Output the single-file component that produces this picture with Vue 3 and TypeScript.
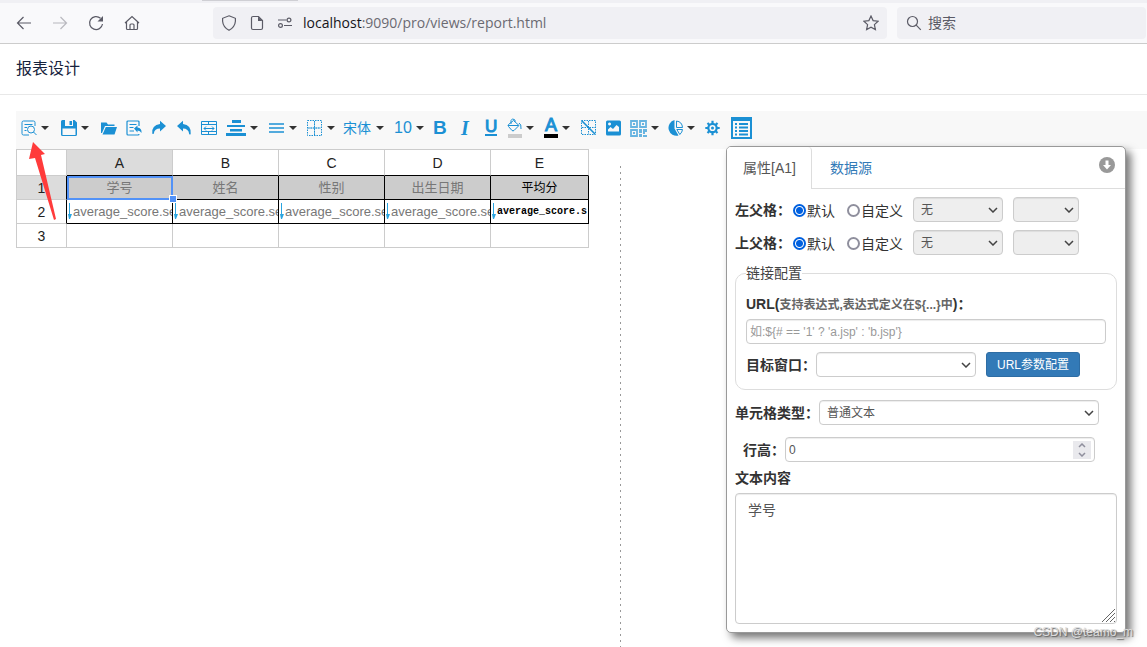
<script setup lang="ts">
import { ref } from 'vue'

interface ParentCell {
  id: string
  label: string
  mode: string
}

const columns = ['A', 'B', 'C', 'D', 'E']
const titles = ['学号', '姓名', '性别', '出生日期', '平均分']
const bindings = ['average_score.se', 'average_score.se', 'average_score.se', 'average_score.se', 'average_score.s']

const parents = ref<ParentCell[]>([
  { id: 'left', label: '左父格：', mode: 'default' },
  { id: 'top', label: '上父格：', mode: 'default' },
])
const link = ref('')
const rowHeight = ref(0)
const content = ref('学号')
</script>

<template>
  <div class="page">
    <div class="tab-strip"><span class="active-tab"></span></div>
    <nav class="browser-bar">
      <div class="nav-buttons">
        <button aria-label="后退">
          <svg class="i16" viewBox="0 0 16 16"><path d="M15 8H1.5M7.5 2L1.5 8l6 6" /></svg>
        </button>
        <button aria-label="前进" class="faded">
          <svg class="i16" viewBox="0 0 16 16"><path d="M1 8h13.500M8.500 2l6 6-6 6" /></svg>
        </button>
        <button aria-label="刷新">
          <svg class="i16" viewBox="0 0 16 16"><path d="M14.500 9A6.500 6.500 0 1 1 12.500 3.300" /><path class="solid" d="M15 1v5.500H9.500z" /></svg>
        </button>
        <button aria-label="主页">
          <svg class="i16" viewBox="0 0 16 16"><path d="M1 8l7-6.500L15 8M2.500 7v6.500q0 1 1 1h9q1 0 1-1V7M6 14.500V10q0-1 1-1h2q1 0 1 1v4.500" /></svg>
        </button>
      </div>
      <div class="address">
        <svg class="i16" viewBox="0 0 16 16"><path d="M8 .8l6.400 2.500v3q-.5 6-6.400 9-5.900-3-6.400-9v-3z" /></svg>
        <svg class="i16 doc" viewBox="0 0 16 16"><path d="M4 1.500h5.500l4 4V13q0 1.500-1.500 1.500H4q-1.500 0-1.500-1.500V3Q2.500 1.500 4 1.500z" /><path class="solid" d="M9 1.500v4.500h4.500z" /></svg>
        <svg class="i16 site" viewBox="0 0 16 16"><path d="M1 5h8.500M7 10.500h8" /><circle cx="12" cy="5" r="1.900" /><circle cx="3.500" cy="10.500" r="1.900" /></svg>
        <span class="url">localhost<span>:9090/pro/views/report.html</span></span>
        <svg class="i16" viewBox="0 0 16 16"><path d="M8 1l2.100 4.600 5 .6-3.700 3.400 1 5L8 12.200l-4.400 2.400 1-5L.9 6.200l5-.6z" /></svg>
      </div>
      <div class="search">
        <svg class="i16" viewBox="0 0 16 16"><circle cx="6.500" cy="6.500" r="5" /><path d="M10.200 10.200l4.600 4.600" /></svg>
        <input type="text" aria-label="搜索" placeholder="搜索" />
      </div>
    </nav>

    <header class="page-head">报表设计</header>

    <main class="workspace">
      <div class="toolbar" role="toolbar">
        <button aria-label="预览">
          <svg class="i16" viewBox="0 0 16 16"><path class="thin" d="M14 6V2.500Q14 1 12.500 1h-10Q1 1 1 2.500v11Q1 15 2.500 15H8M3.500 4.500h8M3.500 7.500H6M3.500 10.500h2" /><circle class="thin" cx="10" cy="9.500" r="3.500" /><path class="thin" d="M12.500 12l3 3" /></svg>
          <i class="caret"></i>
        </button>
        <button aria-label="保存">
          <svg class="i16" viewBox="0 0 16 16"><path class="solid" fill-rule="evenodd" d="M1.500 0h12L16 2.500v12q0 1.500-1.500 1.500h-13Q0 16 0 14.500v-13Q0 0 1.500 0zM4 0v6h8V0zM1.500 8.500V15h13V8.500z" /><path class="solid" d="M8.500 1h2.500v4H8.500z" /></svg>
          <i class="caret"></i>
        </button>
        <button aria-label="打开">
          <svg class="i16" viewBox="0 0 16 16"><path class="solid" d="M0 13V2.500h5.500l1.500 2h6.500V6H4L1 13zM4.800 7H16l-2.500 7.500H1.500z" /></svg>
        </button>
        <button aria-label="导入">
          <svg class="i16" viewBox="0 0 16 16"><path class="import" d="M13 6V2q0-1-1-1H2Q1 1 1 2v12q0 1 1 1h10q1 0 1-1M3.500 4.500h7M3.500 7.500h4M3.500 11H8" /><path class="solid" d="M8 8.500l3.500-3v2Q16 8 15.500 13q-1.200-2.500-4-2.500v2z" /></svg>
        </button>
        <button aria-label="重做">
          <svg class="i16" viewBox="0 0 16 16"><path class="solid" d="M15 6L9 .8V4Q.5 5 1.300 13.500q.8 1.200 1.500 0Q3.500 8.500 9 8.500v3z" /></svg>
        </button>
        <button aria-label="撤销">
          <svg class="i16" viewBox="0 0 16 16"><path class="solid" d="M1 6L7 .8V4q8.500 1 7.700 10-.8 1.200-1.500 0Q12.500 8.500 7 8.500v3z" /></svg>
        </button>
        <button aria-label="合并单元格">
          <svg class="i16" viewBox="0 0 16 16"><path class="thin" d="M.5 1.500h15v13H.5zM.5 4.500h15M.5 11.500h15M7.500 1.500v3M7.500 11.500v3M3 8.500h10M5 6.500l-2 2 2 2M11 6.500l2 2-2 2" /></svg>
        </button>
        <button aria-label="水平对齐">
          <svg class="i20" viewBox="0 0 20 16"><path class="solid" d="M6 0h9v3H6zM1 5h18v2H1zM4 9h12v2.500H4zM0 13h20v3H0z" /></svg>
          <i class="caret"></i>
        </button>
        <button aria-label="垂直对齐">
          <svg class="i16" viewBox="0 0 16 16"><path class="mid" d="M0 4h15M0 8h15M0 12h15" /></svg>
          <i class="caret"></i>
        </button>
        <button aria-label="边框">
          <svg class="i16" viewBox="0 0 16 16"><path class="dots" d="M.5.5h14v15H.5zM7.500 1v14M1 8h13" /><path class="cross" d="M7.500 2v12M2 8h11" /></svg>
          <i class="caret low"></i>
        </button>
        <button class="word">宋体<i class="caret"></i></button>
        <button class="word size">10<i class="caret"></i></button>
        <button class="bold" aria-label="粗体">B</button>
        <button class="italic" aria-label="斜体">I</button>
        <button class="underline" aria-label="下划线"><span>U</span></button>
        <button aria-label="背景色">
          <span class="swatch">
            <svg class="i16" viewBox="0 0 16 16"><path class="thin" d="M6.500 2.500L12 7.500 7 12.500q-1 .8-2 0l-3.500-4q-.8-1 0-2zM1 7.500h10.500M4 6V2.500Q5-.5 8 2v2M12 5q2.500 1 2 6" /></svg>
            <i class="ink gray"></i>
          </span>
          <i class="caret"></i>
        </button>
        <button aria-label="字体颜色">
          <span class="swatch"><b>A</b><i class="ink"></i></span>
          <i class="caret"></i>
        </button>
        <button aria-label="清除边框">
          <svg class="i16" viewBox="0 0 16 16"><path class="dots" d="M.5.5h14v14H.5zM7.500 1v13M1 7.500h13" /><path class="mid" d="M1 1l13 13" /></svg>
        </button>
        <button aria-label="图片">
          <svg class="i16" viewBox="0 0 16 16"><path class="solid" fill-rule="evenodd" d="M1.500.5h12Q15 .5 15 2v12q0 1.500-1.500 1.500h-12Q0 15.500 0 14V2Q0 .5 1.500.5zM2 11.500h11V7L10.500 5 7 9 4.500 7 2 9.500zM3.500 2.500a1.500 1.500 0 1 0 .1 0z" /></svg>
        </button>
        <button aria-label="二维码">
          <svg class="i17 qr" viewBox="0 0 17 17"><path d="M1 1h6v6H1zM10 1h6v6h-6zM1 10h6v6H1z" /><path class="solid" d="M3 3h2v2H3zM12 3h2v2h-2zM3 12h2v2H3zM9 9h3v4H9zM13 9h4v3h-2v2h-2zM9 14h3v3H9zM13 15h4v2h-4z" /></svg>
          <i class="caret"></i>
        </button>
        <button aria-label="图表">
          <svg class="i16" viewBox="0 0 16 16"><path class="solid" d="M7.500 0v8.500l4 7A8 8 0 1 1 7.500 0z" /><path class="thin" d="M9.500 1a7 7 0 0 1 6 6.500h-6zM9.800 9.500h5.700q-.2 2.700-2.700 5z" /></svg>
          <i class="caret"></i>
        </button>
        <button aria-label="设置">
          <svg class="i16" viewBox="0 0 16 16"><circle class="gear" cx="7.500" cy="8" r="4.200" /><circle class="solid" cx="7.500" cy="8" r="1.500" /><path class="teeth" d="M7.500 .8v3M7.500 12.200v3M.3 8h3M11.700 8h3M2.500 3l2 2M10.500 11l2 2M12.500 3l-2 2M4.500 11l-2 2" /></svg>
        </button>
        <button aria-label="属性面板">
          <svg class="i22" viewBox="0 0 21 22"><path class="solid" fill-rule="evenodd" d="M0 0h21v22H0zM2 4v16h17V4z" /><path class="solid" d="M4 6h2v2H4zM8 6h9v2H8zM4 9.500h2v2H4zM8 9.500h9v2H8zM4 13h2v2H4zM8 13h9v2H8zM4 16.500h2v2H4zM8 16.500h9v2H8z" /></svg>
        </button>
      </div>

      <div class="canvas">
        <div class="sheet-area">
          <table class="sheet">
            <thead>
              <tr>
                <th class="row-no"></th>
                <th v-for="(c, i) in columns" :key="c" :class="{ on: i === 0, last: i === 4 }">{{ c }}</th>
              </tr>
            </thead>
            <tbody>
              <tr class="titles">
                <th class="row-no on">1</th>
                <td v-for="(t, i) in titles" :key="t" :class="{ song: i === 4, picked: i === 0 }">{{ t }}</td>
              </tr>
              <tr class="bindings">
                <th class="row-no">2</th>
                <td v-for="(b, i) in bindings" :key="i" :class="{ song: i === 4 }">
                  <div class="bind">
                    <svg viewBox="0 0 4 17"><path d="M1 0h1v11h2l-2 5H1l-1-5h1z" /></svg><span>{{ b }}</span>
                  </div>
                </td>
              </tr>
              <tr class="blank">
                <th class="row-no">3</th>
                <td v-for="c in columns" :key="c"></td>
              </tr>
            </tbody>
          </table>
        </div>
        <div class="splitter"></div>
      </div>
    </main>

    <section class="panel">
      <div class="tabs" role="tablist">
        <button role="tab" class="current" aria-selected="true">属性[A1]</button>
        <button role="tab" aria-selected="false">数据源</button>
        <button class="collapse" aria-label="收起">
          <svg viewBox="0 0 16 16"><circle cx="8" cy="8" r="8" /><path d="M6.500 3.500h3V8H12l-4 4.500L4 8h2.500z" /></svg>
        </button>
      </div>
      <div class="body">
        <div v-for="p in parents" :key="p.id" class="parent-row">
          <b>{{ p.label }}</b>
          <label><input v-model="p.mode" type="radio" :name="p.id" value="default" />默认</label>
          <label class="custom"><input v-model="p.mode" type="radio" :name="p.id" value="custom" />自定义</label>
          <span class="pick col">
            <select disabled :aria-label="p.label + '列'"><option>无</option></select>
            <svg viewBox="0 0 10 6"><path d="M1 1l4 4 4-4" /></svg>
          </span>
          <span class="pick row">
            <select disabled :aria-label="p.label + '行'"><option></option></select>
            <svg viewBox="0 0 10 6"><path d="M1 1l4 4 4-4" /></svg>
          </span>
        </div>

        <fieldset>
          <legend>链接配置</legend>
          <label class="strong" for="link">URL(<small>支持表达式,表达式定义在${...}中</small>)：</label>
          <input id="link" v-model="link" class="text" type="text" placeholder="如:${# == '1' ? 'a.jsp' : 'b.jsp'}" />
          <div class="line">
            <label class="strong" for="target">目标窗口：</label>
            <span class="pick target">
              <select id="target"><option></option></select>
              <svg viewBox="0 0 10 6"><path d="M1 1l4 4 4-4" /></svg>
            </span>
            <button class="primary">URL参数配置</button>
          </div>
        </fieldset>

        <div class="line kind-row">
          <label class="strong" for="kind">单元格类型：</label>
          <span class="pick kind">
            <select id="kind"><option>普通文本</option></select>
            <svg viewBox="0 0 10 6"><path d="M1 1l4 4 4-4" /></svg>
          </span>
        </div>
        <div class="line height-row">
          <label class="strong" for="height">行高：</label>
          <span class="number">
            <input id="height" v-model="rowHeight" type="number" />
            <span class="spin">
              <button aria-label="增加" @click="rowHeight++"><svg viewBox="0 0 8 5"><path d="M1 4l3-3 3 3" /></svg></button>
              <button aria-label="减少" @click="rowHeight--"><svg viewBox="0 0 8 5"><path d="M1 1l3 3 3-3" /></svg></button>
            </span>
          </span>
        </div>
        <label class="strong content-label" for="content">文本内容</label>
        <div class="area">
          <textarea id="content" v-model="content"></textarea>
          <svg class="grip" viewBox="0 0 15 15"><path d="M1 14L14 1M5 14l9-9M9 14l5-5M13 14l1-1" /></svg>
        </div>
      </div>
    </section>

    <svg class="arrow" viewBox="0 0 27 78"><path d="M4 0l12 12-4 1 15 64-2 1L6 16l-6 1z" /></svg>
    <span class="watermark">CSDN @teamo_m</span>
  </div>
</template>

<style>
body {
  margin: 0;
}
</style>

<style scoped>
.page {
  position: relative;
  display: flex;
  flex-direction: column;
  min-height: 100vh;
  overflow: hidden;
  background: #fff;
  color: #333;
  font-family: "Liberation Sans", "Noto Sans CJK SC", sans-serif;
  font-size: 14px;
  line-height: 20px;
}
*, *::before, *::after {
  box-sizing: border-box;
}
button, input, select, textarea {
  margin: 0;
  padding: 0;
  border: 0;
  background: none;
  color: inherit;
  font: inherit;
}
svg {
  display: block;
  flex: none;
  fill: none;
  stroke: currentColor;
}
.i16 { width: 16px; height: 16px; }
.i17 { width: 17px; height: 17px; }
.i20 { width: 20px; height: 16px; }
.i22 { width: 21px; height: 22px; }
.solid { fill: currentColor; stroke: none; }

.tab-strip {
  height: 3px;
  padding-left: 202px;
  background: #f0f0f4;
}
.active-tab {
  display: block;
  width: 96px;
  height: 1px;
  background: #cfcfd4;
}
.browser-bar {
  display: flex;
  height: 41px;
  padding: 4px 1px 4px 16px;
  background: #f9f9fb;
  border-bottom: 1px solid #ccc;
  color: #5b5b66;
}
.browser-bar svg { stroke-width: 1.2; }
.nav-buttons {
  display: flex;
  align-items: center;
  gap: 20px;
  width: 197px;
}
.faded { opacity: .4; }
.address, .search {
  display: flex;
  align-items: center;
  height: 32px;
  border-radius: 4px;
  background: #f0f0f4;
}
.address {
  flex: 1;
  padding: 0 8px;
}
.doc { margin-left: 12px; }
.site { margin: 0 10px 0 12px; }
.url {
  flex: 1;
  color: #15141a;
  font-family: "Open Sans", sans-serif;
  font-size: 14px;
}
.url span { color: #6b6a72; }
.search {
  width: 249px;
  margin-left: 10px;
  padding-left: 9px;
  gap: 6px;
}
.search input { flex: 1; min-width: 0; outline: 0; }
.search input::placeholder { color: #5b5b66; opacity: 1; }

.page-head {
  height: 51px;
  padding: 13px 16px;
  border-bottom: 1px solid #e8e8e8;
  color: #17233d;
  font-size: 16px;
  line-height: 24px;
}
.workspace {
  display: flex;
  flex: 1;
  flex-direction: column;
  padding: 16px 0 0 16px;
}
.toolbar {
  display: grid;
  grid-template-columns: 40px 40px 25px 25px 25px 25px 25px 43px 38px 36px 51px 39px 27px 25px 23px 36px 37px 25px 24px 37px 38px 26px 26px;
  align-items: center;
  height: 38px;
  padding: 0 0 4px 5px;
  background: #f8f8f8;
  color: #1b90d4;
}
.toolbar button {
  display: flex;
  align-items: center;
  gap: 4px;
  height: 30px;
}
.thin { stroke-width: 1; }
.mid { stroke-width: 1.6; }
.import { stroke-width: 1.2; }
.cross { stroke-width: 1; opacity: .5; }
.dots { stroke-width: 1; stroke-dasharray: 1.5 1; }
.gear { stroke-width: 2.2; }
.teeth { stroke-width: 2.2; }
.qr { opacity: .65; stroke-width: 1.8; }
.caret {
  border: 4px solid transparent;
  border-top-color: #333;
  border-bottom: 0;
}
.toolbar .word { gap: 5px; font-size: 14px; }
.toolbar .size { font-size: 16px; gap: 4px; }
.bold, .italic, .underline { font-size: 19px; font-weight: bold; }
.italic { padding-left: 1px; font-family: "Liberation Serif", serif; font-size: 20px; font-style: italic; }
.underline { font-size: 17px; font-weight: normal; -webkit-text-stroke: 1px; }
.underline span { border-bottom: 2px solid; line-height: 14px; }
.swatch { display: flex; flex-direction: column; align-items: center; width: 14px; }
.swatch b { height: 16px; font-size: 18px; font-weight: normal; line-height: 14px; -webkit-text-stroke: 1px; }
.ink { width: 14px; height: 4px; background: #000; }
.ink.gray { background: #ccc; }

.canvas { display: flex; flex: 1; }
.sheet-area { width: 604px; }
.splitter {
  width: 1px;
  margin-top: 17px;
  background: repeating-linear-gradient(#999 0 2px, transparent 2px 6px);
}
.sheet {
  width: 573px;
  table-layout: fixed;
  border-collapse: separate;
  border-spacing: 0;
  border-top: 1px solid #ccc;
  border-left: 1px solid #ccc;
  font-size: 13px;
}
.sheet th, .sheet td {
  height: 24px;
  padding: 0;
  border-right: 1px solid #ccc;
  border-bottom: 1px solid #ccc;
  text-align: center;
  font-weight: normal;
  line-height: 20px;
  overflow: hidden;
}
.sheet th { color: #222; font-size: 14px; }
.sheet thead th { width: 106px; height: 26px; border-bottom-color: #000; }
.sheet thead .row-no { width: 50px; border-bottom-color: #ccc; }
.sheet thead .last { width: 98px; }
.sheet .on { background: #dcdcdc; }
.titles td, .bindings td { border-color: #000; color: #777; }
.titles td { background: #ccc; }
.titles .row-no, .bindings .row-no { border-right-color: #000; }
.sheet .song { color: #000; font-size: 12px; }
.sheet .picked {
  position: relative;
  overflow: visible;
}
.picked::before {
  content: "";
  position: absolute;
  inset: 0 -1px -1px 0;
  border: 2px solid #5292f7;
}
.picked::after {
  content: "";
  position: absolute;
  right: -5px;
  bottom: -4px;
  width: 8px;
  height: 8px;
  border: 1px solid #fff;
  background: #5292f7;
  z-index: 1;
}
.bind {
  display: flex;
  align-items: center;
  gap: 1px;
  padding-left: 1px;
  overflow: hidden;
  white-space: nowrap;
}
.bind svg { width: 4px; height: 17px; fill: #2aa5e0; stroke: none; }
.song .bind span { font-family: "Liberation Mono", monospace; font-size: 10px; font-weight: bold; }

.panel {
  position: absolute;
  top: 146px;
  right: 21px;
  width: 400px;
  border: 1px solid #999;
  border-radius: 5px;
  background: #fff;
  box-shadow: 5px 5px 8px #777;
}
.tabs {
  display: flex;
  height: 42px;
  border-bottom: 1px solid #ddd;
}
.tabs button { padding: 0 15px 0 18px; color: #337ab7; }
.tabs .current {
  height: 42px;
  padding: 0 15px 0 16px;
  border-right: 1px solid #ddd;
  border-radius: 4px 4px 0 0;
  background: #fff;
  color: #555;
}
.tabs .collapse { margin-left: auto; padding: 0 10px 6px 0; color: #999; }
.collapse svg { width: 16px; height: 16px; fill: #999; stroke: none; }
.collapse path { fill: #fff; }
.body { padding: 8px; }
.strong, .parent-row b { font-weight: bold; }
.parent-row {
  display: flex;
  align-items: center;
  height: 25px;
  margin-bottom: 8px;
}
.parent-row label {
  display: flex;
  align-items: center;
  gap: 1px;
  margin-left: 2px;
  padding-top: 2px;
}
.parent-row .custom { margin-left: 12px; }
input[type="radio"] {
  appearance: none;
  width: 13px;
  height: 13px;
  border: 2px solid #8f8f9d;
  border-radius: 50%;
}
input[type="radio"]:checked {
  border-color: #0060df;
  background: radial-gradient(#0060df 3px, #fff 4px);
}
.pick {
  display: grid;
  align-items: center;
  height: 25px;
  font-size: 12px;
}
.pick select, .pick svg { grid-area: 1 / 1; }
.pick svg {
  justify-self: end;
  width: 10px;
  height: 6px;
  margin-right: 5px;
  color: #444;
  stroke-width: 1.5;
  pointer-events: none;
}
.pick select {
  appearance: none;
  width: 100%;
  height: 25px;
  padding: 0 7px;
  color: #555;
}
.pick select, .text, .number, textarea {
  border: 1px solid #ccc;
  border-radius: 4px;
  background: #fff;
  box-shadow: inset 0 1px 1px #00000013;
}
.pick select:disabled { background: #eee; opacity: 1; }
.col { width: 90px; margin-left: 10px; }
.row { width: 66px; margin-left: 10px; }

fieldset {
  min-width: 0;
  margin: 0 0 10px;
  padding: 11px 10px 12px;
  border: 1px solid #ddd;
  border-radius: 10px;
}
legend { padding: 0; color: #444; }
fieldset > label { display: block; height: 25px; }
small { color: #666; font-size: 12px; }
.text {
  display: block;
  width: 100%;
  height: 25px;
  margin-bottom: 8px;
  padding: 0 3px;
  font-size: 12px;
}
.text::placeholder { color: #999; }
.line { display: flex; align-items: center; }
.target { width: 160px; }
.primary {
  height: 25px;
  margin-left: 10px;
  padding: 0 10px;
  border: 1px solid #2e6da4;
  border-radius: 3px;
  background: #337ab7;
  color: #fff;
  font-size: 12px;
}
.kind { width: 280px; }
.height-row { margin: 12px 0 6px 8px; }
.number {
  display: flex;
  align-items: center;
  width: 310px;
  height: 25px;
  padding: 0 3px;
  color: #555;
  font-size: 12px;
}
.number input { flex: 1; min-width: 0; appearance: textfield; outline: 0; }
.number input::-webkit-inner-spin-button { appearance: none; }
.spin { width: 18px; background: #e9e9ed; }
.spin button { display: grid; place-items: center; width: 18px; height: 9px; }
.spin svg { width: 8px; height: 5px; color: #8f8f9d; stroke-width: 1.5; }
.content-label { display: block; margin-bottom: 5px; }
.area { position: relative; }
textarea {
  display: block;
  width: 100%;
  height: 131px;
  padding: 6px 12px;
  color: #555;
  resize: none;
  outline: 0;
}
.grip {
  position: absolute;
  right: 1px;
  bottom: 1px;
  width: 15px;
  height: 15px;
  color: #666;
}
.arrow {
  position: absolute;
  left: 29px;
  top: 142px;
  width: 27px;
  height: 78px;
  fill: #ff3b3b;
  stroke: none;
}
.watermark {
  position: absolute;
  right: 14px;
  bottom: 5px;
  color: #ddd;
  font-size: 12px;
  text-shadow: 1px 1px 1px #666;
}
</style>
